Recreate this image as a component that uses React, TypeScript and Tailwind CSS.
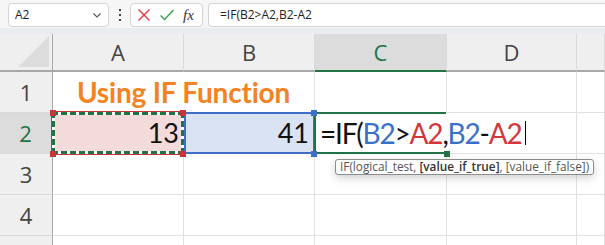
import React from 'react'

const cols = ['A', 'B', 'C', 'D', '']

function HeaderCell({ label, active }: { label: string; active?: boolean }) {
    return (
        <div
            className={`flex items-center justify-center border-r border-r-[#d9d9d9] border-b-2 text-[22px] font-['Open_Sans',sans-serif] ${
                active ? 'bg-[#dcdcdc] text-[#217346] border-b-[#217346]' : 'bg-[#efefef] text-[#444] border-b-[#a8a8a8]'
            }`}
        >
            {label}
        </div>
    )
}

function RowHeader({ n, active }: { n?: number; active?: boolean }) {
    return (
        <div
            className={`flex items-center justify-center border-b border-b-[#d9d9d9] text-[22px] font-['Open_Sans',sans-serif] ${
                active ? 'bg-[#dcdcdc] text-[#217346] border-r-2 border-r-[#217346]' : 'bg-[#efefef] text-[#444] border-r border-r-[#a8a8a8]'
            }`}
        >
            {n}
        </div>
    )
}

const Cell = ({ children, className = '' }: { children?: React.ReactNode; className?: string }) => (
    <div className={`relative border-r border-b border-[#e1e1e1] ${className}`}>{children}</div>
)

const Corner = ({ color, pos }: { color: string; pos: string }) => (
    <span className={`absolute w-[6px] h-[6px] ${color} ${pos} z-20`} />
)

function FormulaBar() {
    return (
        <div className="h-[34px] bg-[#f6f6f6] flex flex-col font-['Open_Sans',sans-serif]">
            <div className="flex items-center pt-[2px] pl-[8px] h-[28px]">
                {/* Name box */}
                <div className="w-[101px] h-[24px] bg-white border border-[#d4d4d4] rounded-[4px] flex items-center justify-between pl-[6px] pr-[5px]">
                    <span className="text-[12px] text-[#222]">A2</span>
                    <svg width="12" height="12" viewBox="0 0 12 12" fill="none" stroke="#555" strokeWidth="1.1">
                        <path d="M2.5 4.5 L6 8 L9.5 4.5" />
                    </svg>
                </div>
                <div className="w-[21px] flex flex-col items-center gap-[3px]">
                    <span className="w-[2px] h-[2px] bg-[#444]" />
                    <span className="w-[2px] h-[2px] bg-[#444]" />
                    <span className="w-[2px] h-[2px] bg-[#444]" />
                </div>
                {/* Cancel / enter / fx */}
                <div className="w-[73px] h-[24px] bg-white border border-[#d4d4d4] rounded-[4px] flex items-center pl-[6px] gap-[8px]">
                    <svg width="14" height="14" viewBox="0 0 14 14" stroke="#e0393e" strokeWidth="1.4">
                        <path d="M1.5 1.5 L12.5 12.5 M12.5 1.5 L1.5 12.5" />
                    </svg>
                    <svg width="16" height="14" viewBox="0 0 16 14" fill="none" stroke="#3aa04b" strokeWidth="1.4">
                        <path d="M1.5 7.5 L5.5 11.5 L14.5 2" />
                    </svg>
                    <span className="text-[15px] italic text-[#333] font-['Liberation_Serif',serif] leading-none">fx</span>
                </div>
                {/* Formula input */}
                <div className="ml-[5px] flex-1 h-[24px] bg-white border border-r-0 border-[#d4d4d4] rounded-l-[4px] flex items-center pl-[11px]">
                    <span className="text-[12px] text-[#222]">=IF(B2&gt;A2,B2-A2</span>
                </div>
            </div>
            <div className="flex-1 bg-[#e9edf1]" />
        </div>
    )
}

export default function App() {
    return (
        <div className="relative w-[605px] h-[245px] overflow-hidden bg-white">
            <FormulaBar />
            <div className="grid grid-cols-[53px_131px_131px_132px_130px_28px] grid-rows-[38px_41px_41px_41px_41px_41px] font-['Lato',sans-serif]">
                {/* corner */}
                <div className="relative bg-[#efefef] border-r border-r-[#a8a8a8] border-b-2 border-b-[#a8a8a8] flex items-end justify-end pr-[3px] pb-[3px]">
                    <svg width="31" height="31" viewBox="0 0 31 31">
                        <path d="M31 0 L31 31 L0 31 Z" fill="#dcdcdc" />
                    </svg>
                </div>
                {cols.map((c) => (
                    <HeaderCell key={c || 'e'} label={c} active={c === 'C'} />
                ))}

                {/* row 1 */}
                <RowHeader n={1} />
                <Cell className="col-span-2 flex items-center justify-center">
                    <span className="text-[28px] font-bold text-[#f58220] tracking-[-0.2px]">Using IF Function</span>
                </Cell>
                <Cell />
                <Cell />
                <Cell />

                {/* row 2 */}
                <RowHeader n={2} active />
                <Cell className="bg-white">
                    <div className="absolute -left-[1px] -top-[1px] -right-[1px] bottom-[-1px] outline outline-1 outline-[#c8343a] border-[3px] border-dashed border-[#217346] bg-white z-10">
                        <div className="w-full h-full bg-[#f4dbdb] flex items-center justify-end pr-[2px] text-[27px] text-[#111]">13</div>
                    </div>
                    <Corner color="bg-[#c8343a]" pos="-left-[3px] -top-[3px]" />
                    <Corner color="bg-[#c8343a]" pos="-right-[3px] -top-[3px]" />
                    <Corner color="bg-[#c8343a]" pos="-left-[3px] -bottom-[4px]" />
                    <Corner color="bg-[#c8343a]" pos="-right-[3px] -bottom-[4px]" />
                </Cell>
                <Cell className="bg-[#dae3f3]">
                    <div className="absolute left-0 -top-[1px] -right-[1px] -bottom-[1px] border-2 border-[#3e6fc6] flex items-center justify-end pr-[4px] text-[27px] text-[#111] z-10">
                        41
                    </div>
                    <Corner color="bg-[#3e6fc6]" pos="-right-[3px] -top-[3px]" />
                    <Corner color="bg-[#3e6fc6]" pos="-right-[3px] -bottom-[4px]" />
                </Cell>
                <Cell className="border-r-white">
                    <div className="absolute -left-[1px] -top-[1px] right-0 -bottom-[1px] border-2 border-r-0 border-[#217346] z-10" />
                    <span className="absolute -right-[4px] -bottom-[4px] w-[6px] h-[6px] bg-[#217346] z-20" />
                    <div className="absolute left-[5px] top-0 bottom-0 flex items-center whitespace-nowrap text-[28px] text-[#111] tracking-[-1.2px] z-20">
                        <span>=IF(</span>
                        <span className="text-[#3a70c9]">B2</span>
                        <span>&gt;</span>
                        <span className="text-[#d2373c]">A2</span>
                        <span>,</span>
                        <span className="text-[#3a70c9]">B2</span>
                        <span>-</span>
                        <span className="text-[#d2373c]">A2</span>
                        <span className="ml-[3px] w-[1px] h-[24px] bg-black" />
                    </div>
                </Cell>
                <Cell />
                <Cell />

                {/* rows 3-5 */}
                {[3, 4, 5].map((r) => (
                    <React.Fragment key={r}>
                        <RowHeader n={r < 5 ? r : undefined} />
                        <Cell />
                        <Cell />
                        <Cell />
                        <Cell />
                        <Cell />
                    </React.Fragment>
                ))}
            </div>

            {/* function tooltip */}
            <div className="absolute left-[335px] top-[159px] h-[16px] px-[4px] bg-white border border-[#8c8c8c] rounded-[3px] shadow-[0_3px_8px_rgba(0,0,0,0.18)] flex items-center whitespace-nowrap text-[11.8px] text-[#555] font-['Open_Sans',sans-serif] z-30">
                IF(logical_test, <b className="ml-[3px] font-semibold text-[#333]">[value_if_true]</b>, [value_if_false])
            </div>
        </div>
    )
}
